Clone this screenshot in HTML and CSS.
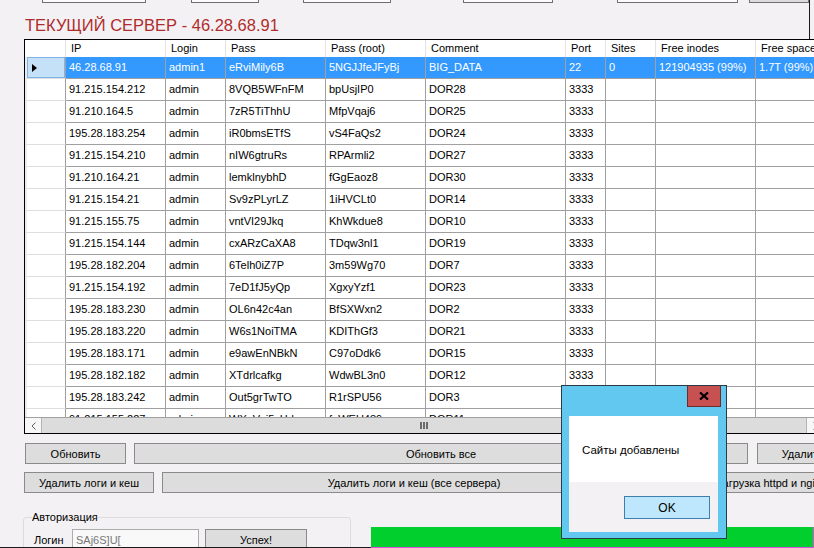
FILE: index.html
```html
<!DOCTYPE html>
<html lang="ru">
<head>
  <meta charset="UTF-8">
  <title>Серверы</title>
  <link rel="stylesheet" href="styles.css">
</head>
<body>

  <div class="head">
    <div class="top-buttons">
      <span class="stub stub-1"></span>
      <span class="stub stub-2"></span>
      <span class="stub stub-3"></span>
      <span class="stub stub-4"></span>
      <span class="stub stub-5"></span>
      <span class="stub stub-6"></span>
    </div>
    <h1 class="server-title">ТЕКУЩИЙ СЕРВЕР - 46.28.68.91</h1>
  </div>

  <div class="grid">
    <div class="grid-view">
      <div class="row header-row">
        <div class="cell rowhead"></div>
        <div class="cell">IP</div>
        <div class="cell">Login</div>
        <div class="cell">Pass</div>
        <div class="cell">Pass (root)</div>
        <div class="cell">Comment</div>
        <div class="cell">Port</div>
        <div class="cell">Sites</div>
        <div class="cell">Free inodes</div>
        <div class="cell">Free space</div>
      </div>
      <div id="gridRows"></div>
    </div>
    <div class="hscroll">
      <div class="scroll-arrow arrow-left">
        <svg width="5" height="8" viewBox="0 0 5 8"><path d="M4.5 0.5 L1 4 L4.5 7.5" fill="none" stroke="#606060" stroke-width="1"/></svg>
      </div>
      <div class="scroll-thumb">
        <span class="grip"></span><span class="grip"></span><span class="grip"></span>
      </div>
      <div class="scroll-arrow arrow-right">
        <svg width="5" height="8" viewBox="0 0 5 8"><path d="M0.5 0.5 L4 4 L0.5 7.5" fill="none" stroke="#606060" stroke-width="1"/></svg>
      </div>
    </div>
  </div>

  <div class="btn-row row-one">
    <button class="btn btn-refresh">Обновить</button>
    <button class="btn btn-refresh-all">Обновить все</button>
    <button class="btn btn-delete">Удалить сервер</button>
  </div>

  <div class="btn-row row-two">
    <button class="btn btn-logs">Удалить логи и кеш</button>
    <button class="btn btn-logs-all">Удалить логи и кеш (все сервера)</button>
    <button class="btn btn-restart">Перезагрузка httpd и nginx</button>
  </div>

  <div class="bottom">
    <fieldset class="auth">
      <legend>Авторизация</legend>
      <div class="auth-row">
        <label class="auth-label">Логин</label>
        <input type="text" class="auth-input" value="SAj6S]U[" readonly>
        <button class="btn btn-success">Успех!</button>
      </div>
    </fieldset>
    <div class="progress"></div>
  </div>
  <div class="base-line"><span class="base-dark"></span><span class="base-pink"></span></div>

  <div class="msgbox">
    <div class="msg-title">
      <div class="msg-close">
        <svg width="10" height="8" viewBox="0 0 10 8"><path d="M1 0.5 L9 7.5 M9 0.5 L1 7.5" stroke="#000" stroke-width="2.2"/></svg>
      </div>
    </div>
    <div class="msg-body">
      <div class="msg-text">Сайты добавлены</div>
      <div class="msg-actions">
        <button class="msg-ok">OK</button>
      </div>
    </div>
  </div>

  <script>
    // ================= SERVERS =================
    const servers = [
      ['46.28.68.91', 'admin1', 'eRviMily6B', '5NGJJfeJFyBj', 'BIG_DATA', '22', '0', '121904935 (99%)', '1.7T (99%)'],
      ['91.215.154.212', 'admin', '8VQB5WFnFM', 'bpUsjIP0', 'DOR28', '3333'],
      ['91.210.164.5', 'admin', '7zR5TiThhU', 'MfpVqaj6', 'DOR25', '3333'],
      ['195.28.183.254', 'admin', 'iR0bmsETfS', 'vS4FaQs2', 'DOR24', '3333'],
      ['91.215.154.210', 'admin', 'nIW6gtruRs', 'RPArmli2', 'DOR27', '3333'],
      ['91.210.164.21', 'admin', 'lemklnybhD', 'fGgEaoz8', 'DOR30', '3333'],
      ['91.215.154.21', 'admin', 'Sv9zPLyrLZ', '1iHVCLt0', 'DOR14', '3333'],
      ['91.215.155.75', 'admin', 'vntVI29Jkq', 'KhWkdue8', 'DOR10', '3333'],
      ['91.215.154.144', 'admin', 'cxARzCaXA8', 'TDqw3nl1', 'DOR19', '3333'],
      ['195.28.182.204', 'admin', '6Telh0iZ7P', '3m59Wg70', 'DOR7', '3333'],
      ['91.215.154.192', 'admin', '7eD1fJ5yQp', 'XgxyYzf1', 'DOR23', '3333'],
      ['195.28.183.230', 'admin', 'OL6n42c4an', 'BfSXWxn2', 'DOR2', '3333'],
      ['195.28.183.220', 'admin', 'W6s1NoiTMA', 'KDIThGf3', 'DOR21', '3333'],
      ['195.28.183.171', 'admin', 'e9awEnNBkN', 'C97oDdk6', 'DOR15', '3333'],
      ['195.28.182.182', 'admin', 'XTdrlcafkg', 'WdwBL3n0', 'DOR12', '3333'],
      ['195.28.183.242', 'admin', 'Out5grTwTO', 'R1rSPU56', 'DOR3', '3333'],
      ['91.215.155.227', 'admin', 'WXuVoi5vHd', 'faWEU489', 'DOR11', '3333']
    ];

    const gridRows = document.getElementById('gridRows');

    servers.forEach((server, index) => {
      const row = document.createElement('div');
      row.className = index === 0 ? 'row selected' : 'row';

      const head = document.createElement('div');
      head.className = 'cell rowhead';
      if (index === 0) {
        const mark = document.createElement('span');
        mark.className = 'row-mark';
        head.appendChild(mark);
      }
      row.appendChild(head);

      for (let i = 0; i < 9; i++) {
        const cell = document.createElement('div');
        cell.className = 'cell';
        cell.textContent = server[i] || '';
        row.appendChild(cell);
      }
      gridRows.appendChild(row);
    });
  </script>

</body>
</html>
```

FILE: styles.css
```css
* {
  box-sizing: border-box;
}

body {
  margin: 0;
  width: 814px;
  height: 548px;
  overflow: hidden;
  position: relative;
  background: #f4f1f4;
  color: #000;
  font-family: 'Liberation Sans', Arial, sans-serif;
  font-size: 11px;
}

/* ================= HEAD ================= */
.head {
  width: 810px;
  height: 39px;
  border-right: 1px solid #1a1a1a;
}

.top-buttons {
  display: flex;
  height: 3px;
}

.stub {
  flex-shrink: 0;
  height: 3px;
  border: 1px solid #6f6f6f;
  border-top: none;
  background: #fbfbfb;
}

.stub-1 { margin-left: 42px; width: 104px; }
.stub-2 { margin-left: 45px; width: 68px; }
.stub-3 { margin-left: 44px; width: 88px; }
.stub-4 { margin-left: 72px; width: 90px; }
.stub-5 { margin-left: 64px; width: 121px; }
.stub-6 { margin-left: 11px; width: 60px; background: #dcdcdc; }

.server-title {
  margin: 13px 0 0 25px;
  font-size: 16.5px;
  line-height: 18px;
  font-weight: normal;
  color: #b02c2c;
  white-space: nowrap;
}

/* ================= GRID ================= */
.grid {
  margin-left: 24px;
  width: 799px;
  border: 1px solid #000;
  border-right: none;
}

.grid-view {
  height: 377px;
  overflow: hidden;
  background: #fff;
}

.row {
  display: grid;
  grid-template-columns: 41px 100px 60px 100px 100px 140px 40px 50px 100px 100px;
  width: 831px;
  height: 22px;
}

.cell {
  padding: 0 3px;
  line-height: 21px;
  white-space: nowrap;
  overflow: hidden;
  border-right: 1px solid #a0a0a0;
  border-bottom: 1px solid #a0a0a0;
}

.header-row {
  height: 17px;
}

.header-row .cell {
  padding: 0 5px;
  line-height: 17px;
  border-bottom: none;
  border-right-color: #e3e3e3;
}

.rowhead {
  padding: 0;
  border-left: 2px solid #ececec;
  border-bottom-color: #dedede;
}

.header-row .rowhead {
  border-left: none;
}

.selected .cell {
  background: #3399ff;
  color: #fff;
}

.selected .rowhead {
  background: #c5e1f8;
  box-shadow: inset 0 0 0 1px #7eb4ea;
}

.row-mark {
  display: inline-block;
  margin-left: 5px;
  vertical-align: middle;
  border-left: 5px solid #000;
  border-top: 4px solid transparent;
  border-bottom: 4px solid transparent;
}

.hscroll {
  display: flex;
  height: 16px;
  border-top: 1px solid #a0a0a0;
  background: #dcdcdc;
}

.scroll-arrow {
  width: 17px;
  display: flex;
  align-items: center;
  justify-content: center;
  background: #f7f7f7;
}

.arrow-left {
  border-right: 1px solid #b4b4b4;
}

.arrow-right {
  border-left: 1px solid #b4b4b4;
}

.scroll-thumb {
  flex: 1;
  display: flex;
  align-items: center;
  justify-content: center;
  gap: 1px;
}

.grip {
  width: 2px;
  height: 7px;
  background: #6d6d6d;
}

/* ================= BUTTONS ================= */
.btn-row {
  display: flex;
  height: 21px;
}

.row-one {
  margin-top: 9px;
}

.row-two {
  margin-top: 8px;
}

.btn {
  flex-shrink: 0;
  height: 21px;
  padding: 0;
  border: 1px solid #8a8a8a;
  background: #dddddd;
  color: #000;
  font-family: 'Liberation Sans', Arial, sans-serif;
  font-size: 11px;
  white-space: nowrap;
  overflow: hidden;
}

.btn-refresh { margin-left: 25px; width: 101px; }
.btn-refresh-all { margin-left: 8px; width: 614px; }
.btn-delete { margin-left: 9px; width: 130px; }

.btn-logs { margin-left: 24px; width: 130px; }
.btn-logs-all { margin-left: 8px; width: 504px; }
.btn-restart { margin-left: 8px; width: 170px; }

/* ================= BOTTOM ================= */
.bottom {
  display: flex;
  height: 36px;
  margin-top: 18px;
  overflow: hidden;
}

.auth {
  flex-shrink: 0;
  margin: 0 0 0 23px;
  padding: 0 0 0 8px;
  width: 328px;
  height: 60px;
  border: 1px solid #dcdcdc;
  border-radius: 3px;
}

.auth legend {
  padding: 0;
  line-height: 13px;
}

.auth-row {
  display: flex;
  align-items: center;
  margin-top: 5px;
}

.auth-label {
  margin-left: 2px;
  width: 38px;
}

.auth-input {
  width: 127px;
  height: 22px;
  padding: 0 3px;
  border: 1px solid #acacac;
  background: #f9f9f9;
  color: #777;
  font-family: 'Liberation Sans', Arial, sans-serif;
  font-size: 11px;
  outline: none;
}

.btn-success {
  margin-left: 6px;
  width: 102px;
  height: 22px;
}

.progress {
  margin: 16px 0 0 20px;
  width: 443px;
  height: 20px;
  background: #00cf2e;
  border-right: 1px solid #e050e0;
}

.base-line {
  display: flex;
  height: 1px;
}

.base-dark {
  width: 371px;
  background: #1a1a1a;
}

.base-pink {
  width: 443px;
  background: #e050e0;
}

/* ================= MESSAGE BOX ================= */
.msgbox {
  position: absolute;
  left: 561px;
  top: 385px;
  width: 166px;
  height: 154px;
  display: flex;
  flex-direction: column;
  border: 1px solid #2a3b46;
  background: #63c8ef;
  padding-bottom: 6px;
}

.msg-title {
  height: 30px;
  display: flex;
  justify-content: flex-end;
  padding-right: 5px;
}

.msg-close {
  width: 34px;
  height: 21px;
  display: flex;
  align-items: center;
  justify-content: center;
  background: #c75050;
  border: 1px solid #6e2b2b;
  border-top: none;
}

.msg-body {
  flex: 1;
  margin: 0 8px 0 7px;
  display: flex;
  flex-direction: column;
}

.msg-text {
  height: 66px;
  padding: 26px 0 0 13px;
  background: #fff;
  font-size: 11.5px;
  line-height: 16px;
  white-space: nowrap;
}

.msg-actions {
  flex: 1;
  display: flex;
  justify-content: flex-end;
  padding: 14px 8px 0 0;
  background: #f4f1f4;
}

.msg-ok {
  width: 86px;
  height: 23px;
  padding: 0;
  border: 1px solid #3c7fb1;
  background: #bee6fd;
  color: #000;
  font-family: 'Liberation Sans', Arial, sans-serif;
  font-size: 12px;
}
```
